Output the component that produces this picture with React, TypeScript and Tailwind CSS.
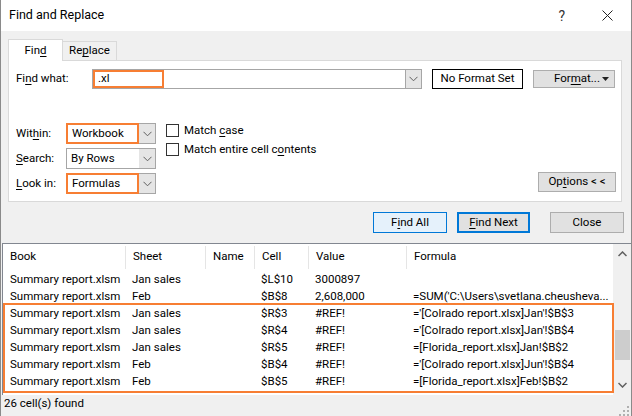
import React from 'react';

const font = { fontFamily: 'Roboto, "Noto Sans", Arial, sans-serif' };

const U = ({ children }: { children: React.ReactNode }) => <span className="underline underline-offset-2">{children}</span>;

const Chevron = () => (
  <svg width="9" height="6" viewBox="0 0 9 6" fill="none">
    <path d="M0.5 0.8 L4.5 4.8 L8.5 0.8" stroke="#606060" strokeWidth="1" />
  </svg>
);

type ComboProps = { value: string; highlight?: boolean };

const Combo = ({ value, highlight }: ComboProps) => (
  <div className="flex h-[21px] w-[90px]">
    <div
      className={`flex flex-1 items-center bg-white pl-[4px] ${
        highlight ? 'border-2 border-[#f77e33]' : 'border border-r-0 border-[#a6a6a6]'
      }`}
    >
      {value}
    </div>
    <div className="flex w-[17px] items-center justify-center border border-l-0 border-[#a6a6a6] bg-[#e5e5e5]">
      <Chevron />
    </div>
  </div>
);

const Checkbox = ({ children }: { children: React.ReactNode }) => (
  <div className="flex items-center gap-[5px]">
    <div className="h-[13px] w-[13px] border border-[#333] bg-white" />
    <span>{children}</span>
  </div>
);

const cols = [
  { name: 'Book', w: 'w-[122px]' },
  { name: 'Sheet', w: 'w-[80px]' },
  { name: 'Name', w: 'w-[49px]' },
  { name: 'Cell', w: 'w-[54px]' },
  { name: 'Value', w: 'w-[98px]' },
  { name: 'Formula', w: 'flex-1' },
];

const rows = [
  ['Summary report.xlsm', 'Jan sales', '', '$L$10', '3000897', ''],
  ['Summary report.xlsm', 'Feb', '', '$B$8', '2,608,000', "=SUM('C:\\Users\\svetlana.cheusheva..."],
  ['Summary report.xlsm', 'Jan sales', '', '$R$3', '#REF!', "='[Colrado report.xlsx]Jan'!$B$3"],
  ['Summary report.xlsm', 'Jan sales', '', '$R$4', '#REF!', "='[Colrado report.xlsx]Jan'!$B$4"],
  ['Summary report.xlsm', 'Jan sales', '', '$R$5', '#REF!', '=[Florida_report.xlsx]Jan!$B$2'],
  ['Summary report.xlsm', 'Feb', '', '$B$4', '#REF!', "='[Colrado report.xlsx]Jun'!$B$4"],
  ['Summary report.xlsm', 'Feb', '', '$B$5', '#REF!', '=[Florida_report.xlsx]Feb!$B$2'],
];

export default function App() {
  return (
    <div
      className="flex h-[416px] w-[632px] flex-col overflow-hidden border-x border-[#8a8a8a] bg-[#f0f0f0] text-[11.5px] leading-none text-black"
      style={font}
    >
      {/* Title bar */}
      <div className="flex h-[31px] items-center bg-white pl-[8px] pr-[18px]">
        <span className="text-[12.5px]">Find and Replace</span>
        <span className="ml-auto mr-[37px] text-[14px] text-[#333]">?</span>
        <svg width="11" height="11" viewBox="0 0 11 11">
          <path d="M0.5 0.5 L10.5 10.5 M10.5 0.5 L0.5 10.5" stroke="#222" strokeWidth="1" />
        </svg>
      </div>

      <div className="px-[7px]">
        {/* Tabs */}
        <div className="mt-[8px] flex items-end">
          <div className="relative z-10 -mb-px flex h-[22px] w-[55px] items-center justify-center border border-b-0 border-[#d9d9d9] bg-white">
            Fin<U>d</U>
          </div>
          <div className="flex h-[19px] w-[54px] items-center justify-center border border-b-0 border-l-0 border-[#d9d9d9] bg-[#f0f0f0]">
            Re<U>p</U>lace
          </div>
        </div>

        {/* Panel */}
        <div className="flex h-[142px] w-[614px] flex-col border border-[#d9d9d9] bg-white pl-[7px] pr-[5px] pt-[8px] pb-[7px]">
          <div className="flex items-center">
            <span className="w-[76px]">
              Fi<U>n</U>d what:
            </span>
            <div className="flex h-[20px] w-[330px] border border-[#a6a6a6]">
              <div className="flex w-[71px] items-center border-2 border-[#f77e33] pl-[3px]">.xl</div>
              <div className="flex-1" />
              <div className="flex w-[16px] items-center justify-center border-l border-[#a6a6a6] bg-[#e5e5e5]">
                <Chevron />
              </div>
            </div>
            <div className="ml-[10px] flex h-[20px] w-[91px] items-center justify-center border border-black">No Format Set</div>
            <div className="ml-[10px] flex h-[18px] w-[82px] items-center border border-[#adadad] bg-[#e1e1e1] pl-[20px]">
              For<U>m</U>at...
              <svg className="ml-auto mr-[5px]" width="7" height="4" viewBox="0 0 7 4">
                <path d="M0 0 H7 L3.5 4 Z" fill="#222" />
              </svg>
            </div>
          </div>

          <div className="mt-auto flex items-end">
            <div className="flex flex-col gap-[4px]">
              <div className="flex items-center">
                <span className="w-[50px]">
                  Wit<U>h</U>in:
                </span>
                <Combo value="Workbook" highlight />
              </div>
              <div className="flex items-center">
                <span className="w-[50px]">
                  <U>S</U>earch:
                </span>
                <Combo value="By Rows" />
              </div>
              <div className="flex items-center">
                <span className="w-[50px]">
                  <U>L</U>ook in:
                </span>
                <Combo value="Formulas" highlight />
              </div>
            </div>
            <div className="mb-[38px] ml-[10px] flex flex-col gap-[6px] self-end">
              <Checkbox>
                Match <U>c</U>ase
              </Checkbox>
              <Checkbox>
                Match entire cell c<U>o</U>ntents
              </Checkbox>
            </div>
            <div className="mb-[2px] ml-auto flex h-[20px] w-[78px] items-center justify-center border border-[#adadad] bg-[#e1e1e1]">
              Op<U>t</U>ions &lt; &lt;
            </div>
          </div>
        </div>
      </div>

      {/* Buttons */}
      <div className="mt-[10px] flex justify-end pr-[7px]">
        <div className="flex h-[21px] w-[74px] items-center justify-center border border-[#0078d7] bg-[#e5f1fb]">
          F<U>i</U>nd All
        </div>
        <div className="ml-[10px] flex h-[21px] w-[73px] items-center justify-center border-2 border-[#0078d7] bg-[#e1e1e1]">
          <U>F</U>ind Next
        </div>
        <div className="ml-[20px] flex h-[21px] w-[74px] items-center justify-center border border-[#adadad] bg-[#e1e1e1]">
          Close
        </div>
      </div>

      {/* Results list */}
      <div className="relative ml-[1px] mt-[10px] flex h-[152px] border-l border-t border-[#828790] bg-white">
        <div className="flex flex-1 flex-col">
          <div className="flex h-[26px] items-center">
            {cols.map((c, i) => (
              <div key={c.name} className={`${c.w} flex h-[23px] items-center pl-[7px] ${i > 0 ? 'border-l border-[#e5e5e5]' : ''}`}>
                {c.name}
              </div>
            ))}
          </div>
          {rows.map((r, ri) => (
            <div key={ri} className="flex h-[17px] items-center leading-[17px]">
              {r.map((cell, ci) => (
                <div key={ci} className={`${cols[ci].w} whitespace-nowrap pl-[7px] pt-px`}>
                  {cell}
                </div>
              ))}
            </div>
          ))}
        </div>
        {/* Scrollbar */}
        <div className="flex w-[18px] flex-col items-center bg-[#f0f0f0] pb-[3px]">
          <div className="flex h-[20px] items-center">
            <svg width="9" height="6" viewBox="0 0 9 6">
              <path d="M0.5 5 L4.5 1 L8.5 5" stroke="#606060" strokeWidth="1.5" fill="none" />
            </svg>
          </div>
          <div className="mt-auto mb-[18px] h-[30px] w-[15px] bg-[#cdcdcd]" />
          <div className="flex h-[14px] items-center">
            <svg width="9" height="6" viewBox="0 0 9 6">
              <path d="M0.5 1 L4.5 5 L8.5 1" stroke="#606060" strokeWidth="1.5" fill="none" />
            </svg>
          </div>
        </div>
        {/* Highlight overlay */}
        <div className="pointer-events-none absolute left-0 top-[59px] h-[90px] w-[611px] border-2 border-[#f77e33]" />
      </div>

      {/* Status bar */}
      <div className="flex flex-1 items-start pl-[3px] pt-[3px]">
        <span>26 cell(s) found</span>
        <svg className="ml-auto mr-[2px] mt-[8px]" width="10" height="10" viewBox="0 0 10 10">
          <rect x="8" y="0" width="2" height="2" fill="#b0b0b0" />
          <rect x="4" y="4" width="2" height="2" fill="#b0b0b0" />
          <rect x="8" y="4" width="2" height="2" fill="#b0b0b0" />
          <rect x="0" y="8" width="2" height="2" fill="#b0b0b0" />
          <rect x="4" y="8" width="2" height="2" fill="#b0b0b0" />
          <rect x="8" y="8" width="2" height="2" fill="#b0b0b0" />
        </svg>
      </div>
    </div>
  );
}
